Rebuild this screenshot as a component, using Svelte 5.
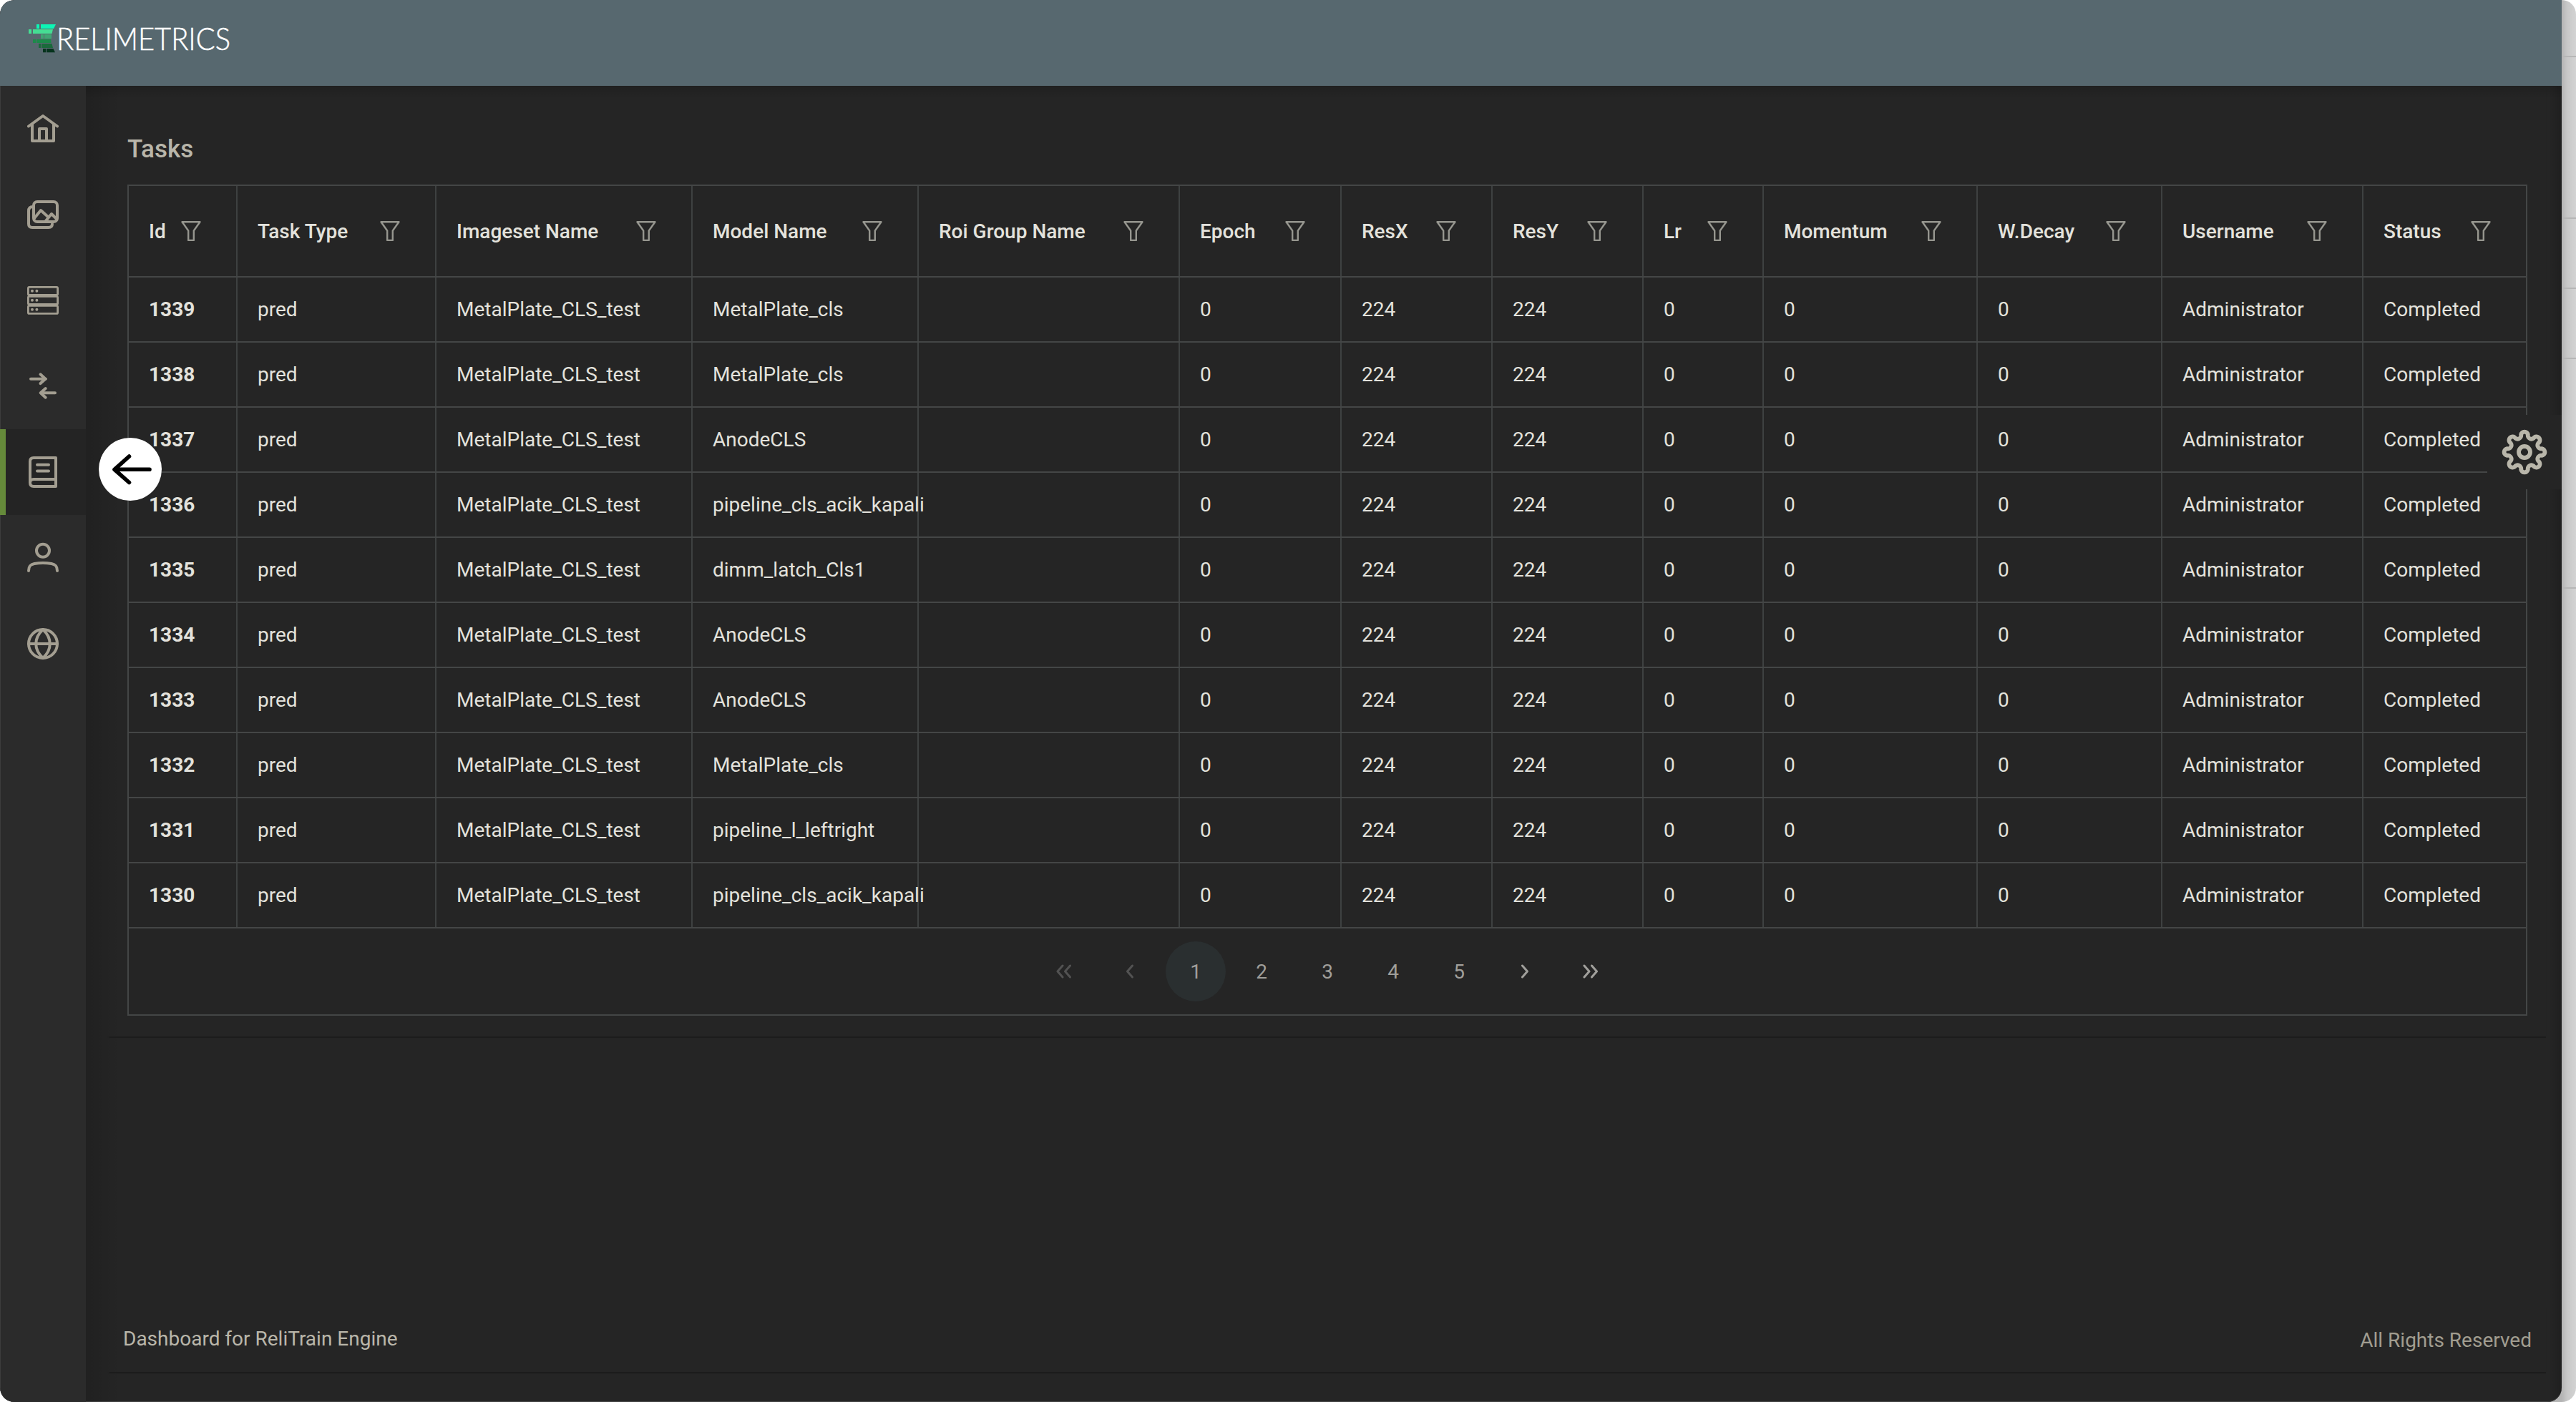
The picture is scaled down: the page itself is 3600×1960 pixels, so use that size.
<script>
  const columns = [
    { key: 'id', label: 'Id' },
    { key: 'type', label: 'Task Type' },
    { key: 'imageset', label: 'Imageset Name' },
    { key: 'model', label: 'Model Name' },
    { key: 'roi', label: 'Roi Group Name' },
    { key: 'epoch', label: 'Epoch' },
    { key: 'resX', label: 'ResX' },
    { key: 'resY', label: 'ResY' },
    { key: 'lr', label: 'Lr' },
    { key: 'momentum', label: 'Momentum' },
    { key: 'decay', label: 'W.Decay' },
    { key: 'user', label: 'Username' },
    { key: 'status', label: 'Status' },
  ];

  const models = [
    'MetalPlate_cls',
    'MetalPlate_cls',
    'AnodeCLS',
    'pipeline_cls_acik_kapali',
    'dimm_latch_Cls1',
    'AnodeCLS',
    'AnodeCLS',
    'MetalPlate_cls',
    'pipeline_l_leftright',
    'pipeline_cls_acik_kapali',
  ];

  const tasks = models.map((model, i) => ({
    id: 1339 - i,
    type: 'pred',
    imageset: 'MetalPlate_CLS_test',
    model,
    roi: '',
    epoch: 0,
    resX: 224,
    resY: 224,
    lr: 0,
    momentum: 0,
    decay: 0,
    user: 'Administrator',
    status: 'Completed',
  }));

  const nav = ['home', 'images', 'servers', 'transfer', 'tasks', 'user', 'globe'];
  const active = 'tasks';
  const pages = [1, 2, 3, 4, 5];

  // Eight-lobed gear outline: alternating outward and inward half circles.
  const gearPoint = (i) => {
    const a = ((i * 22.5 - 101.25) * Math.PI) / 180;
    return `${(33 + 24.8 * Math.cos(a)).toFixed(2)} ${(33 + 24.8 * Math.sin(a)).toFixed(2)}`;
  };
  const gearPath =
    `M${gearPoint(0)}` +
    Array.from({ length: 16 }, (_, i) => `A4.9 4.9 0 0 ${i % 2 ? 0 : 1} ${gearPoint(i + 1)}`).join('') +
    'Z';
</script>

<div class="backdrop">
  <i class="rule r1"></i><i class="rule r2"></i><i class="rule r3"></i><i class="rule r4"></i><i class="rule r5"></i>
  <div class="window">
    <header>
      <svg class="logo" width="300" height="70" viewBox="0 0 300 70">
        <path fill="#0df5b5" d="M11 4h4v6h-4zM17 4h21l-3 6H17z" />
        <path fill="#45dd93" d="M0 11h4v6H0zM6 11h28l-1.500 6H6z" />
        <path fill="#3fa572" d="M17 18h4v6h-4zM22 18h10v6H22z" />
        <path fill="#1c8a4a" d="M6 25h4v5H6zM11 25h20l.5 5H11z" />
        <path fill="#1b6a3c" d="M14 31h3v6h-3zM18 31h14.500l1.500 6H18z" />
        <path fill="#06331d" d="M20 38h4v5.300h-4zM25 38h9.500l2.500 5.300H25z" />
        <text x="39" y="39.700" textLength="243" lengthAdjust="spacingAndGlyphs">RELIMETRICS</text>
      </svg>
    </header>

    <div class="body">
      <nav>
        {#each nav as item}
          <a class:active={item === active} aria-label={item}>
            <svg width="44" height="44" viewBox="0 0 44 44">
              {#if item === 'home'}
                <path d="M2 18.500L22 4l20 14.500M7 16v23h30V16M17 39V22h10v17" />
              {:else if item === 'images'}
                <rect x="9" y="4" width="33" height="28" rx="5" />
                <path d="M8 11C4 11 2 13 2 17v18q0 5 5 5h23q5 0 5-5M10 27l9-11 10 9M25 32l9-11 7 7" />
              {:else if item === 'servers'}
                <g>
                  <rect x="1.400" y="3.400" width="41.200" height="11" rx="1.500" />
                  <rect x="1.400" y="16.400" width="41.200" height="11" rx="1.500" />
                  <rect x="1.400" y="29.400" width="41.200" height="11" rx="1.500" />
                </g>
                <path d="M7 8.800v.01M13.400 8.800v.01M7 21.800v.01M13.400 21.800v.01M7 34.800v.01M13.400 34.800v.01" />
              {:else if item === 'transfer'}
                <path d="M5 11.700h21M18.500 5.300l7 6.400-7 6.400M39 31.300H19M25.700 25l-7 6.300 7 6.400" />
              {:else if item === 'tasks'}
                <path d="M40 2v40H9c-3.500 0-5-2-5-5V7c0-3.500 2-5 5-5zM4 37c0-3.500 2-5 5-5h31M14 11.700h16M14 20.400h16" />
              {:else if item === 'user'}
                <circle cx="22" cy="11.700" r="9" />
                <path d="M2 40C2 33 5 31 10 30q12-2 24 0c5 1 8 3 8 10" />
              {:else}
                <circle cx="22" cy="22" r="20" />
                <path d="M2 22h40M22 2c-13 12-13 28 0 40M22 2c13 12 13 28 0 40" />
              {/if}
            </svg>
          </a>
        {/each}
      </nav>

      <main>
        <section class="card">
          <h1>Tasks</h1>
          <div class="table">
            <div class="row head">
              {#each columns as col}
                <div class="cell">
                  <span>{col.label}</span>
                  <svg width="28" height="28" viewBox="0 0 28 28">
                    <path d="M1.500 1.200h25L17.800 13.500V27h-7.600V13.500z" />
                  </svg>
                </div>
              {/each}
            </div>
            {#each tasks as task}
              <div class="row">
                {#each columns as col}
                  <div class="cell" class:strong={col.key === 'id'}>{task[col.key]}</div>
                {/each}
              </div>
            {/each}
            <div class="pager">
              <span class="off"><svg width="24" height="20" viewBox="0 0 24 20"><path d="M10 2L3 10l7 8M20.500 2l-7 8 7 8" /></svg></span>
              <span class="off"><svg width="12" height="20" viewBox="0 0 12 20"><path d="M9.500 2L2.500 10l7 8" /></svg></span>
              {#each pages as page}
                <span class:current={page === 1}>{page}</span>
              {/each}
              <span><svg width="12" height="20" viewBox="0 0 12 20"><path d="M2.500 2l7 8-7 8" /></svg></span>
              <span><svg width="24" height="20" viewBox="0 0 24 20"><path d="M3 2l7 8-7 8M13.500 2l7 8-7 8" /></svg></span>
            </div>
          </div>
        </section>

        <footer>
          <span>Dashboard for ReliTrain Engine</span>
          <span class="rights">All Rights Reserved</span>
        </footer>
      </main>
    </div>

    <button class="back" aria-label="Back">
      <svg width="88" height="88" viewBox="0 0 88 88">
        <path d="M71 44.300H23M42.500 26L22 44.300 42.500 62.500" />
      </svg>
    </button>
    <button class="settings" aria-label="Settings">
      <svg width="66" height="66" viewBox="0 0 66 66">
        <path d={gearPath} />
        <circle cx="33" cy="33" r="8" />
      </svg>
    </button>
  </div>
</div>

<style>
  :global(body) {
    background: #fff;
    overflow: hidden;
  }
  .backdrop {
    position: relative;
    width: 3600px;
    height: 1960px;
    border-radius: 20px;
    overflow: hidden;
    background: linear-gradient(90deg, #b4b4b4 3580px, #c8c8c8 3588px, #d3d3d3 3600px);
    font-family: Roboto, sans-serif;
    font-size: 28px;
  }
  .rule {
    position: absolute;
    right: 0;
    width: 20px;
    height: 2px;
    background: #b6b6b6;
  }
  .r1 { top: 78px; }
  .r2 { top: 304px; }
  .r3 { top: 402px; }
  .r4 { top: 500px; }
  .r5 { top: 821px; }
  .window {
    position: relative;
    display: flex;
    flex-direction: column;
    width: 3580px;
    height: 1960px;
    background: #252525;
    border-radius: 20px 0 20px 20px;
    overflow: hidden;
    box-shadow: inset 1px 0 #444, inset 0 -1px #444;
  }
  header {
    flex: none;
    height: 120px;
    background: #57686f;
    padding: 30px 0 0 40px;
    box-sizing: border-box;
  }
  .logo {
    display: block;
  }
  .logo text {
    font-family: Lato, sans-serif;
    font-weight: 300;
    font-size: 44px;
    fill: #fff;
    stroke: #fff;
    stroke-width: 0.5px;
  }
  .body {
    flex: 1;
    display: flex;
    min-height: 0;
  }
  nav {
    width: 120px;
    flex: none;
    background: #2b2b2b;
    border-left: 1px solid #3c3c3c;
    box-sizing: border-box;
  }
  nav a {
    display: flex;
    align-items: center;
    justify-content: center;
    height: 120px;
    margin-left: -1px;
    box-sizing: border-box;
  }
  nav a.active {
    background: linear-gradient(90deg, #658a3a 8px, #242424 8px);
  }
  nav svg {
    fill: none;
    stroke: #a39e91;
    stroke-width: 4px;
    stroke-linecap: round;
    stroke-linejoin: round;
  }
  nav g {
    stroke-width: 2.8px;
  }
  main {
    flex: 1;
    display: flex;
    flex-direction: column;
    justify-content: space-between;
    padding: 0 22px 42px 30px;
    background:
      linear-gradient(180deg, rgba(0, 0, 0, 0.14), transparent 18px),
      linear-gradient(90deg, rgba(0, 0, 0, 0.12), transparent 50px),
      linear-gradient(270deg, rgba(0, 0, 0, 0.16), transparent 18px);
  }
  .card {
    padding: 67px 26px 29px 28px;
    box-shadow: 0 2px 1px -0.5px #1c1c1c;
  }
  h1 {
    margin: 0 0 19px;
    height: 52px;
    line-height: 44px;
    font-size: 35px;
    font-weight: 500;
    color: #b9b6aa;
  }
  .table {
    width: 3354px;
    box-sizing: border-box;
    border: 2px solid #444646;
  }
  .row {
    display: grid;
    grid-template-columns: 152px 278px 358px 316px 365px 226px 211px 211px 168px 299px 258px 281px 227px;
    height: 91px;
    box-sizing: border-box;
    border-bottom: 2px solid #444646;
    color: #e3e2dc;
  }
  .row.head {
    height: 128px;
    font-weight: 500;
  }
  .cell {
    display: flex;
    align-items: center;
    padding-left: 28px;
    border-right: 2px solid #3e4141;
    white-space: nowrap;
    min-width: 0;
  }
  .cell:last-child {
    border-right: 0;
  }
  .head .cell {
    justify-content: space-between;
    padding-right: 49px;
  }
  .strong {
    font-weight: 700;
  }
  .head svg {
    flex: none;
    fill: none;
    stroke: #96968f;
    stroke-width: 2.4px;
    stroke-linejoin: round;
  }
  .pager {
    display: flex;
    justify-content: center;
    gap: 8px;
    height: 120px;
    padding-top: 18px;
    box-sizing: border-box;
    color: #a09f9b;
  }
  .pager span {
    display: flex;
    align-items: center;
    justify-content: center;
    width: 84px;
    height: 84px;
    border-radius: 50%;
  }
  .pager .current {
    background: #2a2f30;
  }
  .pager .off {
    color: #525252;
  }
  .pager svg {
    fill: none;
    stroke: currentColor;
    stroke-width: 3px;
    stroke-linecap: round;
    stroke-linejoin: round;
  }
  footer {
    display: flex;
    justify-content: space-between;
    align-items: center;
    height: 92px;
    padding: 0 20px 2px 22px;
    box-sizing: border-box;
    box-shadow: 0 2px 1px -0.5px #1c1c1c;
    color: #b9b6aa;
  }
  .rights {
    color: #a19d90;
    padding-top: 4px;
  }
  button {
    position: absolute;
    border: 0;
    padding: 0;
    display: flex;
    align-items: center;
    justify-content: center;
  }
  .back {
    left: 138px;
    top: 612px;
    width: 88px;
    height: 88px;
    border-radius: 50%;
    background: #fff;
  }
  .back svg {
    fill: none;
    stroke: #000;
    stroke-width: 5.6px;
    stroke-linecap: round;
    stroke-linejoin: round;
  }
  .settings {
    left: 3476px;
    top: 580px;
    width: 104px;
    height: 104px;
    background: #252525;
  }
  .settings svg {
    fill: none;
    stroke: #b9b6aa;
    stroke-width: 5.8px;
    stroke-linejoin: round;
  }
</style>
